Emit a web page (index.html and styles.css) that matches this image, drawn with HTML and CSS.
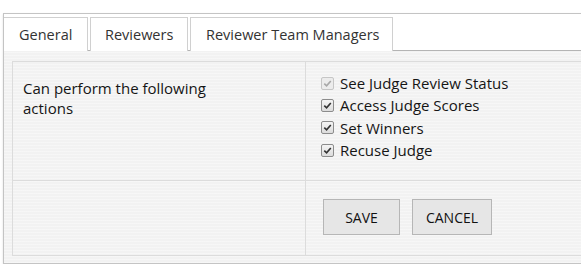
FILE: index.html
```
<!DOCTYPE html>
<html>
<head>
    <link rel="stylesheet" href="styles.css">
</head>
<body>
    <div class="panel">
        <div class="tabs">
            <div class="tab">General</div>
            <div class="tab">Reviewers</div>
            <div class="tab active">Reviewer Team Managers</div>
        </div>

        <div class="tab-content">
            <div class="form-table">
                <div class="cell label-cell">
                    <div class="label-text">Can perform the following actions</div>
                </div>
                <div class="cell options-cell">
                    <label class="option disabled"><span class="checkbox"><svg viewBox="0 0 12 12"><path d="M2.5 6.2 L5 8.6 L9.6 3.2" /></svg></span>See Judge Review Status</label>
                    <label class="option"><span class="checkbox"><svg viewBox="0 0 12 12"><path d="M2.5 6.2 L5 8.6 L9.6 3.2" /></svg></span>Access Judge Scores</label>
                    <label class="option"><span class="checkbox"><svg viewBox="0 0 12 12"><path d="M2.5 6.2 L5 8.6 L9.6 3.2" /></svg></span>Set Winners</label>
                    <label class="option"><span class="checkbox"><svg viewBox="0 0 12 12"><path d="M2.5 6.2 L5 8.6 L9.6 3.2" /></svg></span>Recuse Judge</label>
                </div>
                <div class="cell empty-cell"></div>
                <div class="cell button-cell">
                    <button class="btn save-btn">Save</button>
                    <button class="btn cancel-btn">Cancel</button>
                </div>
            </div>
        </div>
    </div>
</body>
</html>
```

FILE: styles.css
```
html, body {
    overflow: hidden;
}

body {
    margin: 0;
    background-color: white;
    font-family: "Open Sans", Arial, sans-serif;
    color: #222;
}

.panel {
    margin: 13px 0 0 3px;
    width: 620px;
    border: 1px solid #c4c4c4;
    border-right: none;
    padding-top: 3px;
    box-shadow: 0 1px 2px rgba(0,0,0,0.12);
}

.tabs {
    display: flex;
    gap: 2px;
    border-bottom: 1px solid #b4b4b4;
    height: 33px;
}

.tab {
    flex-shrink: 0;
    white-space: nowrap;
    height: 34px;
    line-height: 33px;
    padding: 0 15px;
    font-size: 14.5px;
    color: #333;
    background-color: white;
    border: 1px solid #d0d0d0;
    border-bottom: none;
    box-sizing: border-box;
}

.tab:first-child {
    width: 84px;
    border-left: none;
}

.tab:nth-child(2) {
    width: 98px;
    padding-left: 14px;
}

.tab.active {
    width: 203px;
    position: relative;
    z-index: 1;
}

.tab-content {
    background-color: #f2f2f2;
    background-image:
        repeating-linear-gradient(0deg, rgba(255,255,255,0.35) 0 1px, transparent 1px 3px);
    padding: 10px 0 7px 8px;
}

.form-table {
    display: grid;
    grid-template-columns: 293px 1fr;
    border: 1px solid #dcdcdc;
    border-right: none;
}

.cell {
    box-sizing: border-box;
}

.label-cell,
.empty-cell {
    border-right: 1px solid #dcdcdc;
}

.label-cell,
.options-cell {
    border-bottom: 1px solid #dcdcdc;
    height: 119px;
}

.label-cell {
    padding: 16px 10px 0;
}

.label-text {
    max-width: 200px;
    font-size: 15px;
    line-height: 20px;
    color: #151515;
}

.options-cell {
    padding: 10px 15px 0;
}

.option {
    display: flex;
    align-items: center;
    height: 22.3px;
    font-size: 15px;
    color: #151515;
}

.checkbox {
    width: 11px;
    height: 11px;
    margin-right: 6px;
    border: 1px solid #8c8c8c;
    border-radius: 2px;
    background: linear-gradient(#f4f4f4, #dcdcdc);
    display: inline-flex;
}

.checkbox svg {
    width: 11px;
    height: 11px;
}

.checkbox path {
    fill: none;
    stroke: #333;
    stroke-width: 1.8;
}

.option.disabled .checkbox {
    border-color: #c6c6c6;
    background: #ececec;
}

.option.disabled .checkbox path {
    stroke: #a8a8a8;
}

.button-cell {
    height: 74px;
    padding: 18px 17px 0;
    display: flex;
    gap: 12px;
    align-items: flex-start;
}

.btn {
    height: 36px;
    padding: 0;
    font-family: "Open Sans", Arial, sans-serif;
    font-size: 14px;
    text-transform: uppercase;
    color: #111;
    background-color: #e6e6e6;
    border: 1px solid #b6b6b6;
}

.save-btn {
    width: 77px;
}

.cancel-btn {
    width: 80px;
}
```
